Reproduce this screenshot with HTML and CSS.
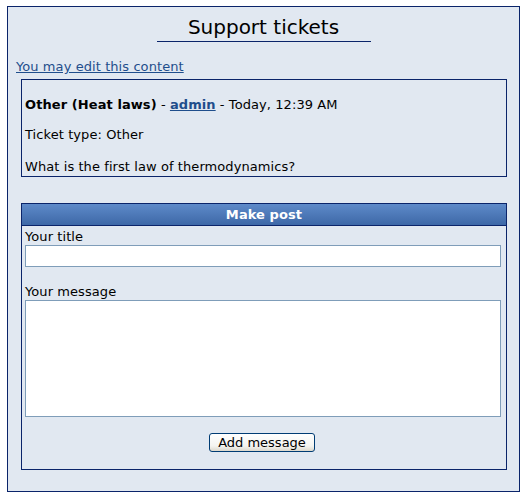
FILE: index.html
```html
<!DOCTYPE html>
<html>
<head>
<meta charset="utf-8">
<title>Support tickets</title>
<link rel="stylesheet" href="styles.css">
</head>
<body>
<div class="page">
  <h1 class="title">Support tickets</h1>
  <div class="edit-line"><a href="#" class="edit-link">You may edit this content</a></div>
  <div class="ticket">
    <div class="ticket-head"><b>Other (Heat laws)</b> - <a href="#" class="user-link">admin</a> - Today, 12:39 AM</div>
    <p class="ticket-line">Ticket type: Other</p>
    <p class="ticket-line last">What is the first law of thermodynamics?</p>
  </div>
  <form class="post-box">
    <div class="post-head">Make post</div>
    <div class="post-body">
      <label class="field-label" for="t">Your title</label>
      <input class="field-input" id="t" type="text">
      <label class="field-label gap" for="m">Your message</label>
      <textarea class="field-area" id="m"></textarea>
      <div class="actions"><button type="button" class="btn">Add message</button></div>
    </div>
  </form>
</div>
</body>
</html>
```
FILE: styles.css
```css
html, body {
  margin: 0;
  padding: 0;
  background: #ffffff;
}
body {
  font-family: "DejaVu Sans", Verdana, sans-serif;
  font-size: 13px;
  line-height: 16px;
  color: #000;
  letter-spacing: 0.08px;
}
.page {
  margin: 6px 0 0 7px;
  width: 511px;
  border: 1px solid #0a246a;
  background: #e1e8f1;
  padding-top: 8px;
  box-sizing: content-box;
  height: 476px;
}
.title {
  font-size: 20px;
  font-weight: normal;
  line-height: 24px;
  letter-spacing: 0;
  margin: 0 auto;
  width: 214px;
  text-align: center;
  padding-bottom: 2px;
  border-bottom: 1px solid #0a246a;
}
.edit-line {
  margin-top: 17px;
  padding-left: 8px;
}
.edit-link {
  color: #1f4e8c;
}
.ticket {
  margin: 4px 12px 0 13px;
  border: 1px solid #0a246a;
  padding: 17px 3px 1px;
}
.ticket-head {
  margin-bottom: 14px;
}
.user-link {
  color: #1f4e8c;
  font-weight: bold;
}
.ticket-line {
  margin: 0 0 16px;
}
.ticket-line.last {
  margin-bottom: 0;
}
.post-box {
  margin: 26px 12px 0 13px;
  border: 1px solid #0a246a;
}
.post-head {
  height: 21px;
  line-height: 21px;
  background: linear-gradient(to bottom, #5e8ac9, #3d68a7);
  border-bottom: 1px solid #0a246a;
  color: #fff;
  font-weight: bold;
  text-align: center;
}
.post-body {
  padding: 3px 5px 17px 3px;
}
.field-label {
  display: block;
}
.field-label.gap {
  margin-top: 17px;
}
.field-input, .field-area {
  display: block;
  width: 100%;
  box-sizing: border-box;
  border: 1px solid #7f9db9;
  background: #fff;
  margin: 0;
  padding: 2px;
  font-family: inherit;
  font-size: 13px;
}
.field-input {
  height: 22px;
}
.field-area {
  height: 117px;
  resize: none;
}
.actions {
  margin-top: 16px;
  text-align: center;
  line-height: 0;
}
.btn {
  font-family: inherit;
  font-size: 13px;
  line-height: 15px;
  height: 19px;
  width: 106px;
  padding: 0;
  margin-left: -2px;
  border: 1px solid #003c74;
  border-radius: 3px;
  background: linear-gradient(to bottom, #ffffff, #f4f4f0 70%, #dcd8cc);
  color: #000;
}
```
